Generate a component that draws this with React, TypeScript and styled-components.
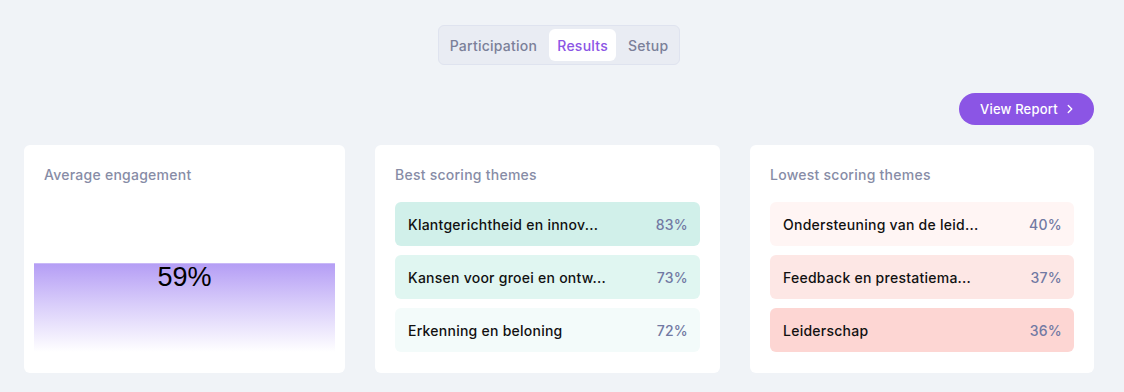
import React from "react";
import styled, { createGlobalStyle } from "styled-components";

const Global = createGlobalStyle`
  html, body { margin: 0; padding: 0; background: #f0f3f7; }
  body { font-family: Inter, "Noto Sans", sans-serif; letter-spacing: 0.25px; -webkit-font-smoothing: antialiased; }
  * { box-sizing: border-box; }
`;

const Page = styled.div`
  width: 1124px;
  height: 392px;
  padding: 25px 30px 0 24px;
  display: flex;
  flex-direction: column;
`;

const TabRow = styled.div`
  display: flex;
  justify-content: center;
`;

const Tabs = styled.div`
  display: flex;
  gap: 4px;
  padding: 3px;
  height: 40px;
  background: #e9ecf3;
  border: 1px solid #dfe3ef;
  border-radius: 6px;
`;

const Tab = styled.div<{ $active?: boolean }>`
  display: flex;
  align-items: center;
  padding: 0 8px;
  border-radius: 6px;
  font-size: 14px;
  font-weight: 500;
  color: ${(p) => (p.$active ? "#8b55e5" : "#7b8099")};
  background: ${(p) => (p.$active ? "#ffffff" : "transparent")};
`;

const ActionRow = styled.div`
  display: flex;
  justify-content: flex-end;
  margin-top: 28px;
`;

const ReportButton = styled.button`
  display: flex;
  align-items: center;
  gap: 5px;
  height: 32px;
  width: 135px;
  padding: 0 0 0 21px;
  border: none;
  border-radius: 16px;
  background: #8b55e5;
  color: #ffffff;
  font-family: inherit;
  letter-spacing: 0.2px;
  font-size: 13px;
  font-weight: 500;
`;

const Cards = styled.div`
  display: grid;
  grid-template-columns: 321px 345px 344px;
  column-gap: 30px;
  margin-top: 20px;
`;

const Card = styled.div`
  background: #ffffff;
  border-radius: 6px;
  height: 228px;
  padding: 20px 20px 21px;
  display: flex;
  flex-direction: column;
`;

const CardTitle = styled.div`
  font-size: 14px;
  font-weight: 500;
  color: #878ca6;
  line-height: 20px;
  margin-bottom: 17px;
`;

const GaugeArea = styled.div`
  flex: 1;
  margin: 0 -10px;
  display: flex;
  flex-direction: column;
  justify-content: flex-end;
`;

const Gauge = styled.div`
  height: 89px;
  border-top: 1px solid #c9b9f8;
  background: linear-gradient(to bottom, #b59ef5 0%, #d8ccfa 45%, #ffffff 100%);
  display: flex;
  justify-content: center;
`;

const GaugeValue = styled.div`
  font-family: "Liberation Sans", Arial, sans-serif;
  letter-spacing: 0;
  font-size: 27px;
  line-height: 26px;
  color: #000000;
`;

const List = styled.div`
  display: flex;
  flex-direction: column;
  gap: 9px;
`;

const Row = styled.div<{ $bg: string }>`
  height: 44px;
  border-radius: 6px;
  background: ${(p) => p.$bg};
  display: flex;
  align-items: center;
  justify-content: space-between;
  padding: 0 12px 0 13px;
`;

const RowLabel = styled.span`
  font-size: 14px;
  font-weight: 500;
  color: #111111;
  white-space: nowrap;
`;

const RowValue = styled.span`
  font-size: 14px;
  font-weight: 500;
  color: #7179a3;
`;

const Chevron = () => (
  <svg width="14" height="14" viewBox="0 0 24 24" fill="none" stroke="#fff" strokeWidth="2.4" strokeLinecap="round" strokeLinejoin="round">
    <path d="M9 6l6 6-6 6" />
  </svg>
);

const best = [
  { label: "Klantgerichtheid en innov...", value: "83%", bg: "#d1f0ea" },
  { label: "Kansen voor groei en ontw...", value: "73%", bg: "#e0f6f1" },
  { label: "Erkenning en beloning", value: "72%", bg: "#f3fbfa" },
];

const lowest = [
  { label: "Ondersteuning van de leid...", value: "40%", bg: "#fff5f4" },
  { label: "Feedback en prestatiema...", value: "37%", bg: "#fde7e5" },
  { label: "Leiderschap", value: "36%", bg: "#fdd6d3" },
];

export default function App() {
  return (
    <>
      <Global />
      <Page>
        <TabRow>
          <Tabs>
            <Tab>Participation</Tab>
            <Tab $active>Results</Tab>
            <Tab>Setup</Tab>
          </Tabs>
        </TabRow>
        <ActionRow>
          <ReportButton>
            View Report <Chevron />
          </ReportButton>
        </ActionRow>
        <Cards>
          <Card>
            <CardTitle>Average engagement</CardTitle>
            <GaugeArea>
              <Gauge>
                <GaugeValue>59%</GaugeValue>
              </Gauge>
            </GaugeArea>
          </Card>
          <Card>
            <CardTitle>Best scoring themes</CardTitle>
            <List>
              {best.map((r) => (
                <Row key={r.label} $bg={r.bg}>
                  <RowLabel>{r.label}</RowLabel>
                  <RowValue>{r.value}</RowValue>
                </Row>
              ))}
            </List>
          </Card>
          <Card>
            <CardTitle>Lowest scoring themes</CardTitle>
            <List>
              {lowest.map((r) => (
                <Row key={r.label} $bg={r.bg}>
                  <RowLabel>{r.label}</RowLabel>
                  <RowValue>{r.value}</RowValue>
                </Row>
              ))}
            </List>
          </Card>
        </Cards>
      </Page>
    </>
  );
}
